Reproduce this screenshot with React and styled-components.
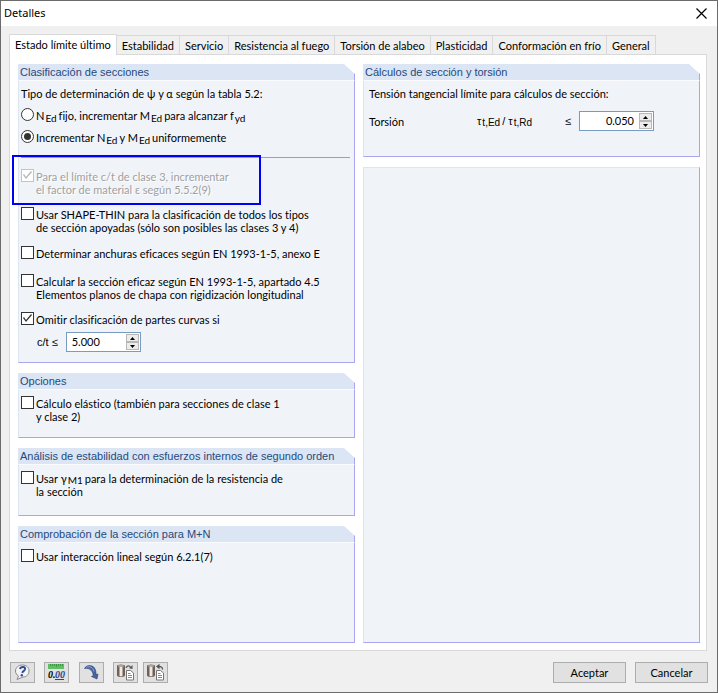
import React from "react";
import styled, { createGlobalStyle } from "styled-components";

const UI_FONT = 'Lato, "Noto Sans", sans-serif';
const HEAD_FONT = '"Liberation Sans", Arial, sans-serif';

const Global = createGlobalStyle`
  * { box-sizing: border-box; }
  body { margin: 0; background: #f0f0f0; }
  button, input { font: inherit; color: inherit; margin: 0; }
`;

const Window = styled.main`
  min-height: 100vh;
  display: flex;
  flex-direction: column;
  border: 1px solid #6b6b6b;
  background: #f0f0f0;
  color: #000;
  font: 11px/13px ${UI_FONT};
  font-variant-ligatures: none;
`;

const TitleBar = styled.header`
  display: flex;
  align-items: center;
  justify-content: space-between;
  height: 25px;
  padding: 0 10px 1px 3px;
  background: #fff;
`;

const Title = styled.h1`
  margin: 0;
  font: 11px/14px "Noto Sans", sans-serif;
`;

const CloseButton = styled.button`
  display: flex;
  padding: 0;
  border: 0;
  background: none;
`;

const TabStrip = styled.div`
  display: flex;
  align-items: flex-end;
  padding: 8px 0 0 8px;
`;

const Tab = styled.button`
  flex: none;
  height: ${(p) => (p.$active ? 21 : 19)}px;
  padding: ${(p) => (p.$active ? "0 5px 2px" : "0 5px")};
  border: 1px solid #d9d9d9;
  border-bottom: 0;
  border-left-width: ${(p) => (p.$active ? 1 : 0)}px;
  background: ${(p) => (p.$active ? "#fff" : "#f0f0f0")};
  margin-bottom: ${(p) => (p.$active ? -1 : 0)}px;
  z-index: ${(p) => (p.$active ? 1 : 0)};
  white-space: nowrap;
`;

const Page = styled.section`
  flex: 1;
  display: grid;
  grid-template-columns: 1fr 1fr;
  gap: 8px;
  margin: 0 10px 0 8px;
  padding: 9px 6px 7px 8px;
  border: 1px solid #d9d9d9;
  background: #fff;
`;

const Column = styled.div`
  display: flex;
  flex-direction: column;
  gap: 10px;
  min-width: 0;
`;

const GroupBox = styled.section`
  display: flex;
  flex-direction: column;
  flex: ${(p) => (p.$fill ? "1" : "none")};
`;

const GroupTitle = styled.h2`
  height: 16px;
  margin: 0;
  padding: 1px 2px 0;
  border-right: 1px solid #a9a5ee;
  background: #dce5f4;
  clip-path: polygon(0 0, calc(100% - 11px) 0, 100% 10px, 100% 100%, 0 100%);
  color: #1f4a7c;
  font: 11px/14px ${HEAD_FONT};
  white-space: nowrap;
`;

const GroupBody = styled.div`
  flex: 1;
  display: flex;
  flex-direction: column;
  padding: ${(p) => p.$pad || "6px 4px 10px 2px"};
  border: 1px solid #a9a5ee;
  border-top-color: #f9fbfe;
  border-left-color: #dce5f4;
  background: #f0f4f9;
`;

const EmptyBox = styled.div`
  flex: 1;
  border: 1px solid #a9a5ee;
  border-top-color: #dce5f4;
  border-left-color: #dce5f4;
  background: #f0f4f9;
`;

const Intro = styled.p`
  margin: 0;
`;

const Divider = styled.hr`
  width: 100%;
  height: 1px;
  margin: 12px 0 11px;
  border: 0;
  background: #a0a0a0;
`;

const Option = styled.label`
  display: grid;
  grid-template-columns: 13px 1fr;
  gap: 2px;
  margin-top: ${(p) => p.$space || 0}px;
  color: ${(p) => (p.$disabled ? "#a0a0a0" : "#000")};
  text-shadow: ${(p) => (p.$disabled ? "1px 1px 0 #fff" : "none")};
`;

const OptionText = styled.span`
  padding: 1px 0;
  white-space: nowrap;
`;

const Tick = styled.input`
  appearance: none;
  width: 13px;
  height: 13px;
  border: 1px solid #333;
  background: #fff;

  &:checked::before {
    content: "";
    display: block;
    height: 11px;
    background: #333;
    clip-path: polygon(1px 5px, 2px 4px, 4px 7px, 9px 1px, 10px 2px, 4px 9px);
  }
  &:disabled {
    border-color: #c4c4c4;
  }
  &:disabled::before {
    background: #b4b4b4;
  }
`;

const Radio = styled.input`
  appearance: none;
  width: 13px;
  height: 13px;
  padding: 2px;
  border: 1px solid #333;
  border-radius: 50%;
  background: #fff;

  &:checked::before {
    content: "";
    display: block;
    height: 7px;
    border-radius: 50%;
    background: #333;
  }
`;

const Sub = styled.sub`
  padding: 0 2px 0 1px;
  font-size: 10px;
  line-height: 0;
  vertical-align: ${(p) => (p.$slight ? -1 : -2)}px;
`;

const Highlighted = styled.div`
  position: relative;

  &::after {
    content: "";
    position: absolute;
    inset: -14px 89px -8px -9px;
    border: 2px solid #0000f5;
    pointer-events: none;
  }
`;

const FieldLabel = styled.label`
  font-family: ${(p) => (p.$sans ? HEAD_FONT : UI_FONT)};
`;

const LimitRow = styled.div`
  display: flex;
  align-items: center;
  gap: 8px;
  margin-top: 5px;
  padding-left: 16px;
`;

const StressRow = styled.div`
  display: grid;
  grid-template-columns: 108px 1fr 14px 75px;
  align-items: center;
  margin-top: 11px;
  padding-right: 41px;
`;

const Symbol = styled.span`
  font-family: ${HEAD_FONT};
`;

const SpinFrame = styled.div`
  display: flex;
  width: 75px;
  height: 20px;
  border: 1px solid #7a9bc0;
  background: #fff;
`;

const SpinInput = styled.input`
  flex: 1;
  min-width: 0;
  padding: 0 5px 2px;
  border: 0;
  outline: 0;
  background: none;
  text-align: ${(p) => p.$align};
`;

const SpinButtons = styled.div`
  display: grid;
  grid-template-rows: 1fr 1fr;
  width: 14px;
  padding: 1px 1px 1px 0;
`;

const SpinButton = styled.button`
  display: flex;
  align-items: center;
  justify-content: center;
  padding: 0;
  border: 1px solid #b8b8b8;
  background: #ececec;
`;

const Footer = styled.footer`
  display: flex;
  align-items: center;
  padding: 11px 9px 9px;
`;

const Tools = styled.div`
  display: flex;
  flex: 1;
`;

const ToolButton = styled.button`
  display: flex;
  width: 25px;
  height: 21px;
  margin-right: ${(p) => p.$after || 0}px;
  padding: 0;
  border: 1px solid #adadad;
  background: #e1e1e1;
`;

const PushButton = styled.button`
  width: 73px;
  height: 21px;
  margin-left: 9px;
  padding: 0;
  border: 1px solid #adadad;
  background: #e1e1e1;
`;

function ToolIcon({ children }) {
  return (
    <svg width="23" height="19" viewBox="0 0 23 19" aria-hidden="true">
      {children}
    </svg>
  );
}

function DatabaseGlyph() {
  return (
    <>
      <path d="M3 3 Q3 1.500 7 1.500 Q11 1.500 11 3 V12 Q11 14 7 14 Q3 14 3 12Z" fill="#6e6258" />
      <path d="M5.500 4 H8.500 V13.300 H5.500Z" fill="#efeae4" />
      <ellipse cx="7" cy="3" rx="3.200" ry="1" fill="#b7aca2" />
      <path d="M12.500 7.500 H16.500 L19.500 10 V17 H12.500Z" fill="#fff" stroke="#777" />
      <path d="M14 10.500H16.500M14 12.500H18M14 14.500H18" stroke="#888" fill="none" />
    </>
  );
}

function Spin({ id, value, align }) {
  return (
    <SpinFrame>
      <SpinInput id={id} defaultValue={value} $align={align} />
      <SpinButtons>
        <SpinButton type="button" aria-label="Aumentar">
          <svg width="5" height="3" viewBox="0 0 5 3"><path d="M0 3 L2.500 0 L5 3Z" /></svg>
        </SpinButton>
        <SpinButton type="button" aria-label="Disminuir">
          <svg width="5" height="3" viewBox="0 0 5 3"><path d="M0 0 L2.500 3 L5 0Z" /></svg>
        </SpinButton>
      </SpinButtons>
    </SpinFrame>
  );
}

function Check({ children, space, disabled, checked }) {
  return (
    <Option $space={space} $disabled={disabled}>
      <Tick type="checkbox" defaultChecked={checked} disabled={disabled} />
      <OptionText>{children}</OptionText>
    </Option>
  );
}

const TABS = [
  "Estado límite último",
  "Estabilidad",
  "Servicio",
  "Resistencia al fuego",
  "Torsión de alabeo",
  "Plasticidad",
  "Conformación en frío",
  "General",
];

export default function App() {
  return (
    <>
      <Global />
      <Window>
        <TitleBar>
          <Title>Detalles</Title>
          <CloseButton type="button" aria-label="Cerrar">
            <svg width="11" height="11" viewBox="0 0 11 11">
              <path d="M0.500 0.500 L10.500 10.500 M10.500 0.500 L0.500 10.500" stroke="#000" strokeWidth="1.200" />
            </svg>
          </CloseButton>
        </TitleBar>

        <TabStrip role="tablist">
          {TABS.map((name, i) => (
            <Tab key={name} type="button" role="tab" aria-selected={i === 0} $active={i === 0}>
              {name}
            </Tab>
          ))}
        </TabStrip>

        <Page>
          <Column>
            <GroupBox>
              <GroupTitle>Clasificación de secciones</GroupTitle>
              <GroupBody>
                <Intro>Tipo de determinación de ψ y α según la tabla 5.2:</Intro>
                <Option $space={8}>
                  <Radio type="radio" name="tipo" />
                  <OptionText>N<Sub>Ed</Sub>fijo, incrementar M<Sub>Ed</Sub>para alcanzar f<Sub>yd</Sub></OptionText>
                </Option>
                <Option $space={7}>
                  <Radio type="radio" name="tipo" defaultChecked />
                  <OptionText>Incrementar N<Sub>Ed</Sub>y M<Sub>Ed</Sub>uniformemente</OptionText>
                </Option>
                <Divider />
                <Highlighted>
                  <Check disabled checked>
                    Para el límite c/t de clase 3, incrementar<br />el factor de material ε según 5.5.2(9)
                  </Check>
                </Highlighted>
                <Check space={10}>
                  Usar SHAPE-THIN para la clasificación de todos los tipos<br />
                  de sección apoyadas (sólo son posibles las clases 3 y 4)
                </Check>
                <Check space={11}>Determinar anchuras eficaces según EN 1993-1-5, anexo E</Check>
                <Check space={13}>
                  Calcular la sección eficaz según EN 1993-1-5, apartado 4.5<br />
                  Elementos planos de chapa con rigidización longitudinal
                </Check>
                <Check space={10} checked>Omitir clasificación de partes curvas si</Check>
                <LimitRow>
                  <FieldLabel $sans htmlFor="ct">c/t ≤</FieldLabel>
                  <Spin id="ct" value="5.000" align="left" />
                </LimitRow>
              </GroupBody>
            </GroupBox>

            <GroupBox>
              <GroupTitle>Opciones</GroupTitle>
              <GroupBody $pad="6px 4px 13px 2px">
                <Check>
                  Cálculo elástico (también para secciones de clase 1<br />y clase 2)
                </Check>
              </GroupBody>
            </GroupBox>

            <GroupBox>
              <GroupTitle>Análisis de estabilidad con esfuerzos internos de segundo orden</GroupTitle>
              <GroupBody $pad="6px 4px 16px 2px">
                <Check>
                  Usar γ<Sub $slight>M1</Sub>para la determinación de la resistencia de<br />la sección
                </Check>
              </GroupBody>
            </GroupBox>

            <GroupBox $fill>
              <GroupTitle>Comprobación de la sección para M+N</GroupTitle>
              <GroupBody $pad="6px 4px 13px 2px">
                <Check>Usar interacción lineal según 6.2.1(7)</Check>
              </GroupBody>
            </GroupBox>
          </Column>

          <Column>
            <GroupBox>
              <GroupTitle>Cálculos de sección y torsión</GroupTitle>
              <GroupBody $pad="6px 4px 25px 5px">
                <Intro>Tensión tangencial límite para cálculos de sección:</Intro>
                <StressRow>
                  <FieldLabel htmlFor="torsion">Torsión</FieldLabel>
                  <Symbol>τ<Sub $slight>t,Ed</Sub>/ τ<Sub $slight>t,Rd</Sub></Symbol>
                  <Symbol>≤</Symbol>
                  <Spin id="torsion" value="0.050" align="right" />
                </StressRow>
              </GroupBody>
            </GroupBox>
            <EmptyBox />
          </Column>
        </Page>

        <Footer>
          <Tools>
            <ToolButton type="button" aria-label="Ayuda" $after={9}>
              <ToolIcon>
                <path d="M11.500 2 C15.500 2 18 4.500 18 8 C18 11.500 15.500 14 12 14 L6 16.500 L7.500 13 C5.500 11.800 4.500 10 4.500 8 C4.500 4.500 7.500 2 11.500 2Z" fill="#f4f4f6" stroke="#8a8a8e" />
                <path d="M9 6 Q9.500 4 12 4 Q14.500 4 14 6.300 Q13.500 8 11.800 8.700 L11.300 10" fill="none" stroke="#2e4d92" strokeWidth="2" />
                <circle cx="10.800" cy="12.300" r="1.200" fill="#2e4d92" />
              </ToolIcon>
            </ToolButton>
            <ToolButton type="button" aria-label="Unidades y decimales" $after={10}>
              <ToolIcon>
                <path d="M3 1 H19 V6 H3Z" fill="#5fbf62" />
                <path d="M5.500 1V3M7.500 1V3M9.500 1V3M11.500 1V4M13.500 1V3M15.500 1V3M17.500 1V3" stroke="#2f7d38" strokeWidth="0.600" />
                <text x="3" y="15" fontFamily="Liberation Serif" fontWeight="bold" fontStyle="italic" fontSize="10">0.</text>
                <text x="10" y="15" fontFamily="Liberation Serif" fontWeight="bold" fontStyle="italic" fontSize="10" fill="#24468f">00</text>
                <path d="M10 16.500H19" stroke="#24468f" />
              </ToolIcon>
            </ToolButton>
            <ToolButton type="button" aria-label="Predeterminado" $after={9}>
              <ToolIcon>
                <path d="M4.500 5.500 C6 2 12 1.500 14.500 5 C16 7.500 16 9 16 11.500 L18 11 L17 16 L11.500 13.500 L13.300 12.500 C13 8.500 10 4.500 4.500 5.500Z" fill="#4464a6" stroke="#2b3c68" strokeWidth="0.600" />
                <path d="M6.500 4.300 C9.500 3 13 4 14 8.500" fill="none" stroke="#8fa7d8" />
              </ToolIcon>
            </ToolButton>
            <ToolButton type="button" aria-label="Guardar ajustes" $after={5}>
              <ToolIcon>
                <DatabaseGlyph />
                <path d="M12 5 C13 2.500 15 2.500 16.500 4" fill="none" stroke="#666" strokeWidth="1.300" />
                <path d="M18.500 2 V6 L15 5.300Z" fill="#555" />
              </ToolIcon>
            </ToolButton>
            <ToolButton type="button" aria-label="Cargar ajustes">
              <ToolIcon>
                <DatabaseGlyph />
                <path d="M18.500 6.500 C18.500 4 17 3.500 14.500 3.500" fill="none" stroke="#555" strokeWidth="1.300" />
                <path d="M15.500 0.800 V6.200 L12 3.500Z" fill="#555" />
              </ToolIcon>
            </ToolButton>
          </Tools>
          <PushButton type="button">Aceptar</PushButton>
          <PushButton type="button">Cancelar</PushButton>
        </Footer>
      </Window>
    </>
  );
}
